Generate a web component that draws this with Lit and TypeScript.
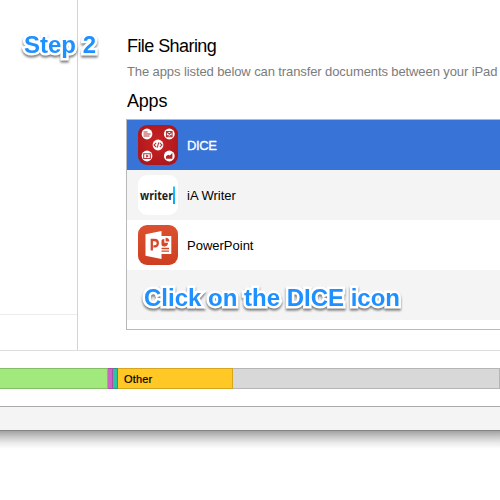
import { LitElement, html, css, svg } from "lit";
import { customElement } from "lit/decorators.js";

const diceIcon = html`<svg class="icon" viewBox="0 0 40 40">
  <defs>
    <radialGradient id="dice" cx="50%" cy="45%" r="70%">
      <stop offset="0" stop-color="#cc2224" />
      <stop offset="1" stop-color="#a5161a" />
    </radialGradient>
  </defs>
  <rect width="40" height="40" rx="9" fill="url(#dice)" />
  ${[[9, 9], [31.3, 9], [20, 20], [9, 31], [31.3, 31]].map(
    ([x, y]) => svg`<circle cx=${x} cy=${y} r="5.4" fill="#fff" />`
  )}
  <g fill="none" stroke="#b8383c" stroke-width="1.1">
    <path d="M5.5 7h4M5.5 9h7M5.5 11h6" />
    <path d="M28.5 6.5h5.6v5.2h-5.6zM29 7l4.6 4.4M33.6 7L29 11.4" />
    <path d="M18.2 17.8L16 20l2.2 2.2M21.8 17.8L24 20l-2.2 2.2M20.8 17.4l-1.6 5.2" />
    <path d="M5.7 28.7h6.6v4.8H5.7z" />
  </g>
  <path d="M8.2 29.5v3.2l2.6-1.6zM28 33.7v-2.4l2.2-1.6 1.6.8 2.6-2.6v5.8z" fill="#b02428" />
</svg>`;

const writerIcon = html`<svg class="icon" viewBox="0 0 40 40">
  <defs>
    <linearGradient id="caret" x1="0" y1="0" x2="0" y2="1">
      <stop offset="0" stop-color="#16c8fa" />
      <stop offset="1" stop-color="#0da4f3" />
    </linearGradient>
  </defs>
  <rect width="40" height="40" rx="9" fill="#fff" />
  <text class="writer" x="2" y="25" textLength="33" lengthAdjust="spacingAndGlyphs">writer</text>
  <rect x="35" y="11.5" width="2" height="17.5" fill="url(#caret)" />
</svg>`;

const powerpointIcon = html`<svg class="icon" viewBox="0 0 40 40">
  <defs>
    <linearGradient id="ppt" x1="0" y1="0" x2="0" y2="1">
      <stop offset="0" stop-color="#dc5030" />
      <stop offset="1" stop-color="#cd3f20" />
    </linearGradient>
  </defs>
  <rect width="40" height="40" rx="9" fill="url(#ppt)" />
  <path d="M23 11h10.3v18H23z" fill="#fff" />
  <path d="M26.3 14a3.7 3.7 0 1 0 3.7 3.7h-3.7z" fill="#d4472a" />
  <path d="M27.6 12.7v3.7h3.7a3.7 3.7 0 0 0-3.7-3.7z" fill="#d4472a" />
  <path d="M23 23.5h8M23 26.2h8" stroke="#d4472a" stroke-width="1.3" />
  <path d="M7.5 9.2L23.5 6v28L7.5 30.8z" fill="#fff" />
  <path d="M13.8 25.5V15h2.8c2.4 0 3.2 1.4 3.2 3.2 0 2.2-1.5 3.4-4.5 3.2" fill="none" stroke="#d4472a" stroke-width="2.3" />
</svg>`;

const apps = [
  { name: "DICE", icon: diceIcon, cls: "row selected" },
  { name: "iA Writer", icon: writerIcon, cls: "row" },
  { name: "PowerPoint", icon: powerpointIcon, cls: "row" },
];

@customElement("app-root")
export class AppRoot extends LitElement {
  static styles = css`
    :host {
      display: block;
      position: relative;
      width: 500px;
      height: 500px;
      overflow: hidden;
      background: #fff;
      color: #000;
      font-family: "Liberation Sans", Arial, sans-serif;
      white-space: nowrap;
    }
    * { box-sizing: border-box; }
    .main { display: flex; height: 351px; border-bottom: 1px solid #dedede; }
    .sidebar { width: 78px; flex: none; border-right: 1px solid #d4d4d4; }
    .devices { height: 315px; border-bottom: 1px solid #ececec; }
    .content { flex: 1; min-width: 0; padding: 35px 0 0 48px; overflow: hidden; }
    h2 { margin: 0 0 0 1px; font-size: 18px; font-weight: 400; line-height: 22px; }
    .sharing { letter-spacing: -0.57px; }
    .apps-title { letter-spacing: -0.2px; }
    .hint { margin: 7px 0 10px 1px; font-size: 13px; line-height: 16px; color: #7c7c7c; letter-spacing: -0.1px; }
    .list {
      width: 400px;
      height: 211px;
      margin-top: 7px;
      border: 1px solid #b9b9b9;
      font-size: 13px;
    }
    .row { display: flex; align-items: center; gap: 9px; height: 50px; padding-left: 11px; }
    .row:nth-child(even) { background: #f4f4f4; }
    .row.selected { background: #3873d8; color: #fff; -webkit-text-stroke: 0.3px #fff; letter-spacing: -0.4px; }
    .icon { display: block; width: 40px; height: 40px; }
    .writer { font: bold 13px "Open Sans", sans-serif; fill: #1c1c1c; }
    .storage { display: flex; height: 21px; margin-top: 17px; font-size: 11px; line-height: 21px; }
    .storage div { border: 1px solid; border-left: 0; height: 21px; }
    .storage .audio { width: 108px; background: #a1e97c; border-color: #84bd68; }
    .storage .photos { width: 5px; background: #cb64c2; border-color: #a94fa2; }
    .storage .books { width: 5px; background: #2ac3a4; border-color: #239c84; }
    .storage .other { width: 115px; padding-left: 6px; background: #ffc824; border-color: #d6a51e; line-height: 20px; letter-spacing: 0.15px; -webkit-text-stroke: 0.2px #000; }
    .storage .free { flex: 1; background: #d8d8d8; border-color: #b5b5b5; }
    .footer { height: 25px; margin-top: 17px; background: #f4f4f4; border-top: 1px solid #aaa; border-bottom: 1px solid #858585; }
    .shadow { height: 18px; background: linear-gradient(#a3a3a3, #c6c6c6 30%, #eaeaea 65%, #fff); }
    .callout {
      position: absolute;
      font-weight: 700;
      font-size: 24px;
      line-height: 28px;
      color: #1e90ff;
      -webkit-text-stroke: 5px #fff;
      paint-order: stroke fill;
      stroke-linejoin: round;
      filter: drop-shadow(0 2px 1.3px rgba(0, 0, 0, 0.5));
    }
    .step { left: 24px; top: 31px; }
    .click { left: 144px; top: 284px; }
  `;

  render() {
    return html`
      <div class="main">
        <div class="sidebar"><div class="devices"></div></div>
        <div class="content">
          <h2 class="sharing">File Sharing</h2>
          <p class="hint">The apps listed below can transfer documents between your iPad and this computer.</p>
          <h2 class="apps-title">Apps</h2>
          <div class="list">
            ${apps.map((a) => html`<div class=${a.cls}>${a.icon}<span>${a.name}</span></div>`)}
            <div class="row"></div>
          </div>
        </div>
      </div>
      <div class="storage">
        <div class="audio"></div>
        <div class="photos"></div>
        <div class="books"></div>
        <div class="other">Other</div>
        <div class="free"></div>
      </div>
      <div class="footer"></div>
      <div class="shadow"></div>
      <div class="callout step">Step 2</div>
      <div class="callout click">Click on the DICE icon</div>
    `;
  }
}
